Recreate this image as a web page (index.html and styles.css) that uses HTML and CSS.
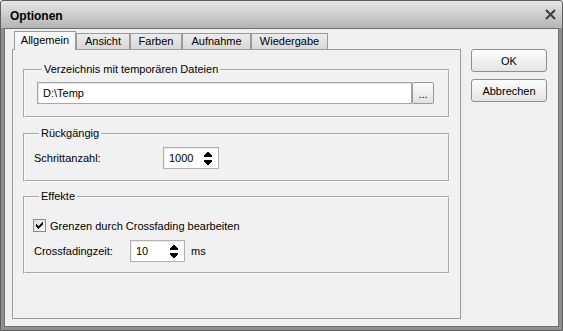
FILE: index.html
```html
<!DOCTYPE html>
<html lang="de">
<head>
<meta charset="utf-8">
<title>Optionen</title>
<link rel="stylesheet" href="styles.css">
</head>
<body>
<div class="window">
  <div class="titlebar">
    <span class="title">Optionen</span>
    <svg class="close" width="11" height="11" viewBox="0 0 11 11"><path d="M1 1L10 10M10 1L1 10" stroke="#3e3e3e" stroke-width="2.1" fill="none"/></svg>
  </div>
  <div class="body">
    <div class="tabctl">
      <div class="tabs">
        <div class="tab active t-allg">Allgemein</div>
        <div class="tab t-ans">Ansicht</div>
        <div class="tab t-farb">Farben</div>
        <div class="tab t-auf">Aufnahme</div>
        <div class="tab t-wied">Wiedergabe</div>
      </div>
      <div class="panel">
        <fieldset class="group g1">
          <legend>Verzeichnis mit temporären Dateien</legend>
          <div class="pathrow">
            <div class="input">D:\Temp</div>
            <div class="browse">...</div>
          </div>
        </fieldset>
        <fieldset class="group g2">
          <legend>Rückgängig</legend>
          <div class="row">
            <span class="label w-steps">Schrittanzahl:</span>
            <div class="spin">
              <span class="val">1000</span>
              <svg class="arrows" width="8" height="13" viewBox="0 0 8 13" shape-rendering="crispEdges"><path d="M3 0h2v1h-2zM2 1h4v1h-4zM1 2h6v1h-6zM0 3h8v2h-8zM0 8h8v2h-8zM1 10h6v1h-6zM2 11h4v1h-4zM3 12h2v1h-2z" fill="#000"/></svg>
            </div>
          </div>
        </fieldset>
        <fieldset class="group g3">
          <legend>Effekte</legend>
          <div class="checkrow">
            <svg class="check" width="13" height="13" viewBox="0 0 13 13" shape-rendering="crispEdges">
              <defs><linearGradient id="cg" x1="0" y1="0" x2="1" y2="1"><stop offset="0" stop-color="#d9d9d9"/><stop offset="1" stop-color="#fbfbfb"/></linearGradient></defs>
              <rect x="0.5" y="0.5" width="12" height="12" fill="url(#cg)" stroke="#8a8a8a"/>
              <path d="M9 3h1v1h-1zM8 4h2v1h-2zM3 5h1v1h-1zM7 5h3v1h-3zM3 6h2v1h-2zM6 6h3v1h-3zM3 7h5v1h-5zM4 8h3v1h-3zM5 9h1v1h-1z" fill="#111"/>
            </svg>
            <span>Grenzen durch Crossfading bearbeiten</span>
          </div>
          <div class="row">
            <span class="label w-cf">Crossfadingzeit:</span>
            <div class="spin small">
              <span class="val">10</span>
              <svg class="arrows" width="8" height="13" viewBox="0 0 8 13" shape-rendering="crispEdges"><path d="M3 0h2v1h-2zM2 1h4v1h-4zM1 2h6v1h-6zM0 3h8v2h-8zM0 8h8v2h-8zM1 10h6v1h-6zM2 11h4v1h-4zM3 12h2v1h-2z" fill="#000"/></svg>
            </div>
            <span class="unit">ms</span>
          </div>
        </fieldset>
      </div>
    </div>
    <div class="buttons">
      <button class="btn">OK</button>
      <button class="btn">Abbrechen</button>
    </div>
  </div>
</div>
</body>
</html>
```
FILE: styles.css
```css
* { box-sizing: border-box; }
html, body { margin: 0; padding: 0; }
body {
  width: 563px;
  height: 331px;
  overflow: hidden;
  background: #ffffff;
  font-family: "Liberation Sans", Arial, sans-serif;
  font-size: 11px;
  color: #000;
}
.window {
  width: 563px;
  height: 331px;
  display: flex;
  flex-direction: column;
  border: 1px solid #5e5e5e;
  border-radius: 3px 3px 0 0;
  background: #8f8f8f;
}
.titlebar {
  flex: none;
  height: 27px;
  display: flex;
  align-items: center;
  justify-content: space-between;
  padding: 2px 6px 0 9px;
  background: linear-gradient(#e6e6e6, #b4b4b4);
  border-radius: 2px 2px 0 0;
}
.title {
  font-weight: bold;
  font-size: 12px;
}
.close { margin-top: -3px; }
.body {
  flex: 1;
  display: flex;
  gap: 10px;
  margin: 0 3px 3px;
  border: 1px solid #6f6f6f;
  background: #f0f0f0;
  padding: 2px 11px 7px 7px;
}
.tabctl {
  width: 449px;
  display: flex;
  flex-direction: column;
}
.tabs {
  position: relative;
  z-index: 1;
  height: 19px;
  margin-bottom: -1px;
  padding-left: 2px;
  display: flex;
  align-items: flex-end;
}
.tab {
  flex: none;
  height: 16px;
  margin-bottom: 1px;
  padding: 0 0 1px;
  line-height: 14px;
  text-align: center;
  border: 1px solid #9a9a9a;
  border-bottom: none;
  background: linear-gradient(#ececec, #d8d8d8);
  white-space: nowrap;
}
.tab.active {
  height: 19px;
  margin-bottom: 0;
  padding-top: 1px;
  padding-bottom: 0;
  background: linear-gradient(#fbfbfb, #f2f2f2);
}
.t-allg { width: 62px; }
.t-ans { width: 54px; }
.t-farb { width: 52px; }
.t-auf { width: 69px; }
.t-wied { width: 77px; }
.panel {
  flex: 1;
  border: 1px solid #9c9c9c;
  background: #f1f1f1;
  padding: 0 10px;
}
.group {
  margin: 9px 0 0;
  padding: 0;
  min-width: 0;
  border: 2px groove #fbfbfb;
}
.group legend {
  margin-left: 5px;
  padding: 0 2px 2px;
  line-height: 12px;
}
.g1 { margin-top: 13px; padding: 5px 14px 12px 12px; }
.g2 { padding: 6px 10px 11px 9px; }
.g3 { margin-top: 8px; padding: 13px 10px 10px 9px; }
.pathrow { display: flex; }
.input {
  flex: 1;
  height: 22px;
  line-height: 20px;
  padding-left: 5px;
  background: #fff;
  border: 1px solid #a6a6a6;
  box-shadow: inset 1px 1px 0 #e3e3e3;
}
.browse {
  width: 22px;
  height: 22px;
  line-height: 22px;
  text-align: center;
  border: 1px solid #9a9a9a;
  border-radius: 2px;
  background: linear-gradient(#fbfbfb, #e1e1e1);
}
.row {
  display: flex;
  align-items: center;
}
.label { flex: none; }
.w-steps { width: 129px; }
.w-cf { width: 96px; }
.spin {
  width: 56px;
  height: 22px;
  display: flex;
  align-items: center;
  justify-content: space-between;
  padding: 0 6px 0 5px;
  background: #fff;
  border: 1px solid #b2b2b2;
  box-shadow: inset 1px 1px 0 #ececec;
}
.spin.small { width: 55px; }
.arrows { margin-top: 1px; }
.unit { margin-left: 6px; }
.checkrow {
  height: 17px;
  display: flex;
  align-items: center;
  gap: 4px;
  margin-bottom: 6px;
  margin-left: -1px;
}
.buttons {
  width: 76px;
  margin-top: 18px;
  display: flex;
  flex-direction: column;
  gap: 7px;
}
.btn {
  height: 23px;
  padding: 0;
  font: inherit;
  color: #000;
  border: 1px solid #8e8e8e;
  border-radius: 3px;
  background: linear-gradient(#fdfdfd, #e4e4e4);
}
```
